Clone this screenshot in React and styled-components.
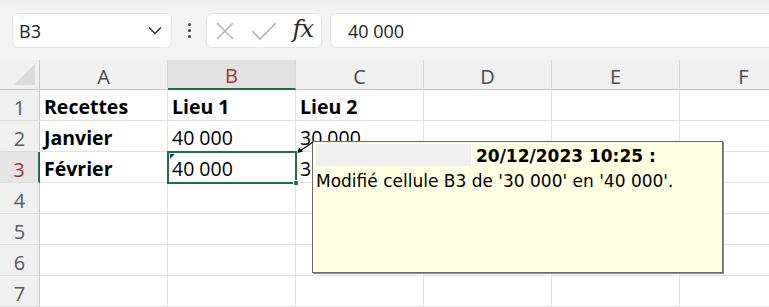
import React from "react";
import styled, { createGlobalStyle } from "styled-components";

const GlobalStyle = createGlobalStyle`
  * { box-sizing: border-box; }
  body {
    margin: 0;
    background: #ffffff;
    font-family: "Open Sans", "Liberation Sans", sans-serif;
  }
`;

const Page = styled.div`
  position: relative;
  width: 769px;
  height: 307px;
  overflow: hidden;
  background: #fff;
`;

const Toolbar = styled.div`
  height: 60px;
  display: flex;
  align-items: flex-start;
  padding: 13px 0 0 12px;
  background: linear-gradient(#e9e9e9 0, #f3f3f3 6px, #f3f3f3 100%);
`;

const Box = styled.div`
  height: 35px;
  background: #fff;
  border: 1px solid #e4e4e4;
  border-radius: 6px;
  display: flex;
  align-items: center;
`;

const NameBox = styled(Box)`
  width: 160px;
  padding: 0 9px 0 6px;
  justify-content: space-between;
  font-size: 18px;
  color: #222;
`;

const Dots = styled.div`
  width: 34px;
  height: 35px;
  display: flex;
  flex-direction: column;
  align-items: center;
  justify-content: center;
  gap: 3px;

  span {
    width: 3px;
    height: 3px;
    border-radius: 50%;
    background: #444;
  }
`;

const FxBox = styled(Box)`
  width: 116px;
  padding: 0 8px 0 8px;
  justify-content: space-between;
`;

const Fx = styled.span`
  font-family: "DejaVu Serif", "Liberation Serif", serif;
  font-style: italic;
  font-size: 24px;
  letter-spacing: -1px;
  color: #2b2b2b;
  margin-top: -4px;
`;

const FormulaInput = styled(Box)`
  flex: 1;
  margin-left: 8px;
  border-right: none;
  border-radius: 6px 0 0 6px;
  padding-left: 17px;
  font-size: 18px;
  color: #222;
`;

const Grid = styled.div`
  display: grid;
  grid-template-columns: 40px repeat(6, 128px);
  grid-template-rows: 30px repeat(7, 31px);
`;

const Corner = styled.div`
  position: relative;
  background: #f0f0f0;
  border-right: 1px solid #c9c9c9;
  border-bottom: 1px solid #c9c9c9;

  &::after {
    content: "";
    position: absolute;
    right: 4px;
    bottom: 4px;
    width: 0;
    height: 0;
    border-left: 21px solid transparent;
    border-bottom: 21px solid #dcdcdc;
  }
`;

const ColHead = styled.div`
  background: ${(p) => (p.$active ? "#e1e1e1" : "#f0f0f0")};
  border-right: 1px solid #d8d8d8;
  border-bottom: ${(p) => (p.$active ? "2px solid #1e7145" : "1px solid #c9c9c9")};
  display: flex;
  align-items: center;
  justify-content: center;
  padding-top: 3px;
  font-size: 20px;
  color: ${(p) => (p.$active ? "#a4362f" : "#4a4a4a")};
`;

const RowHead = styled.div`
  background: ${(p) => (p.$active ? "#e6e6e6" : "#f0f0f0")};
  border-bottom: 1px solid #dcdcdc;
  border-right: ${(p) => (p.$active ? "2px solid #1e7145" : "1px solid #c9c9c9")};
  display: flex;
  align-items: center;
  justify-content: center;
  padding-top: 4px;
  font-size: 20px;
  color: ${(p) => (p.$active ? "#a4362f" : "#5a5a5a")};
`;

const Cell = styled.div`
  position: relative;
  border-right: 1px solid #e1e1e1;
  border-bottom: 1px solid #e1e1e1;
  display: flex;
  align-items: flex-end;
  padding: 0 0 0 4px;
  font-size: 19.5px;
  font-weight: ${(p) => (p.$bold ? 700 : 400)};
  color: #000;
  white-space: nowrap;
  line-height: 26px;

  ${(p) =>
    p.$active &&
    `
    &::before {
      content: "";
      position: absolute;
      left: -1px;
      top: -1px;
      right: -2px;
      bottom: -2px;
      border: 2px solid #1e7145;
      z-index: 2;
    }
  `}
`;

const FillHandle = styled.span`
  position: absolute;
  right: -4px;
  bottom: -4px;
  width: 6px;
  height: 6px;
  background: #1e7145;
  border: 1px solid #fff;
  z-index: 3;
`;

const ChangeMark = styled.span`
  position: absolute;
  left: 2px;
  top: 2px;
  width: 0;
  height: 0;
  border-top: 5px solid #1f3a93;
  border-right: 5px solid transparent;
  z-index: 3;
`;

const Comment = styled.div`
  position: absolute;
  left: 312px;
  top: 141px;
  width: 411px;
  height: 132px;
  background: #ffffe1;
  border: 1px solid #6b6b6b;
  box-shadow: 1px 1px 0 #8c8c8c;
  padding: 2px 3px;
  font-family: "DejaVu Sans", Verdana, sans-serif;
  font-size: 17px;
  color: #000;
  z-index: 5;
`;

const CommentHead = styled.div`
  display: flex;
  align-items: center;
  height: 22px;
  gap: 5px;
`;

const Author = styled.span`
  width: 155px;
  height: 22px;
  background: #efefef;
`;

const Stamp = styled.span`
  font-weight: 700;
  padding-top: 2px;
`;

const CommentText = styled.div`
  line-height: 24px;
  padding-top: 3px;
`;

const Arrow = styled.svg`
  position: absolute;
  left: 294px;
  top: 138px;
  z-index: 6;
`;

const columns = ["A", "B", "C", "D", "E", "F"];

const data = [
  [{ v: "Recettes", b: true }, { v: "Lieu 1", b: true }, { v: "Lieu 2", b: true }],
  [{ v: "Janvier", b: true }, { v: "40 000" }, { v: "30 000" }],
  [{ v: "Février", b: true }, { v: "40 000", active: true }, { v: "30 000" }],
];

export default function App() {
  return (
    <Page>
      <GlobalStyle />
      <Toolbar>
        <NameBox>
          <span>B3</span>
          <svg width="14" height="9" viewBox="0 0 14 9">
            <path d="M1 1.5 L7 7.5 L13 1.5" fill="none" stroke="#333" strokeWidth="1.5" />
          </svg>
        </NameBox>
        <Dots>
          <span />
          <span />
          <span />
        </Dots>
        <FxBox>
          <svg width="20" height="20" viewBox="0 0 20 20">
            <path d="M2 2 L18 18 M18 2 L2 18" stroke="#b4b4b4" strokeWidth="1.6" />
          </svg>
          <svg width="26" height="20" viewBox="0 0 26 20">
            <path d="M1 10 L9 18 L25 2" fill="none" stroke="#b4b4b4" strokeWidth="1.6" />
          </svg>
          <Fx>fx</Fx>
        </FxBox>
        <FormulaInput>40 000</FormulaInput>
      </Toolbar>

      <Grid>
        <Corner />
        {columns.map((c) => (
          <ColHead key={c} $active={c === "B"}>
            {c}
          </ColHead>
        ))}
        {Array.from({ length: 7 }, (_, r) => (
          <React.Fragment key={r}>
            <RowHead $active={r === 2}>{r + 1}</RowHead>
            {columns.map((c, ci) => {
              const cell = data[r] && data[r][ci];
              return (
                <Cell key={c} $bold={cell && cell.b} $active={cell && cell.active}>
                  {cell && cell.v}
                  {cell && cell.active && (
                    <>
                      <ChangeMark />
                      <FillHandle />
                    </>
                  )}
                </Cell>
              );
            })}
          </React.Fragment>
        ))}
      </Grid>

      <Arrow width="24" height="20" viewBox="0 0 24 20">
        <line x1="19" y1="4" x2="6" y2="13" stroke="#000" strokeWidth="1.2" />
        <path d="M3.5 15 L5 9.5 L9 13.5 Z" fill="#000" />
      </Arrow>

      <Comment>
        <CommentHead>
          <Author />
          <Stamp>20/12/2023 10:25 :</Stamp>
        </CommentHead>
        <CommentText>Modifié cellule B3 de '30 000' en '40 000'.</CommentText>
      </Comment>
    </Page>
  );
}
